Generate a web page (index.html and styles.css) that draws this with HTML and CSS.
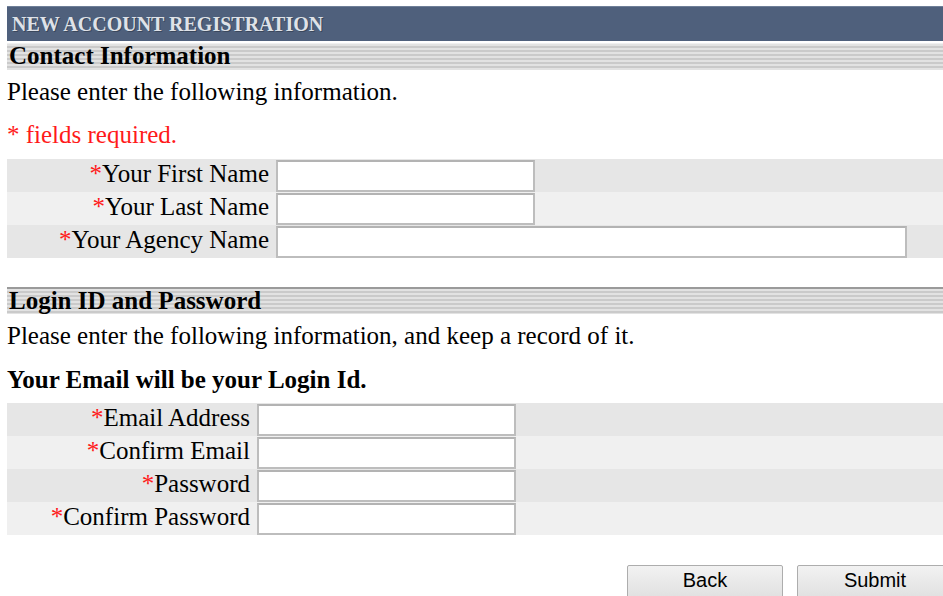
FILE: index.html
```html
<!DOCTYPE html>
<html>
<head>
<meta charset="utf-8">
<title>New Account Registration</title>
<link rel="stylesheet" href="styles.css">
</head>
<body>
<div class="page">
  <div class="title-bar">NEW ACCOUNT REGISTRATION</div>

  <div class="section-band first">Contact Information</div>
  <p class="intro">Please enter the following information.</p>
  <p class="required-note"><span class="star">*</span> fields required.</p>

  <table class="form-table contact">
    <tr class="row-dark">
      <td class="label"><span class="star">*</span>Your First Name</td>
      <td class="field"><input type="text" class="input"></td>
    </tr>
    <tr class="row-light">
      <td class="label"><span class="star">*</span>Your Last Name</td>
      <td class="field"><input type="text" class="input"></td>
    </tr>
    <tr class="row-dark">
      <td class="label"><span class="star">*</span>Your Agency Name</td>
      <td class="field"><input type="text" class="input wide"></td>
    </tr>
  </table>

  <div class="section-band second">Login ID and Password</div>
  <p class="intro">Please enter the following information, and keep a record of it.</p>
  <p class="login-note">Your Email will be your Login Id.</p>

  <table class="form-table login">
    <tr class="row-dark">
      <td class="label"><span class="star">*</span>Email Address</td>
      <td class="field"><input type="text" class="input"></td>
    </tr>
    <tr class="row-light">
      <td class="label"><span class="star">*</span>Confirm Email</td>
      <td class="field"><input type="text" class="input"></td>
    </tr>
    <tr class="row-dark">
      <td class="label"><span class="star">*</span>Password</td>
      <td class="field"><input type="password" class="input"></td>
    </tr>
    <tr class="row-light">
      <td class="label"><span class="star">*</span>Confirm Password</td>
      <td class="field"><input type="password" class="input"></td>
    </tr>
  </table>

  <div class="actions">
    <button type="button" class="btn">Back</button>
    <button type="button" class="btn">Submit</button>
  </div>
</div>
</body>
</html>
```
FILE: styles.css
```css
html {
  overflow: hidden;
}

body {
  margin: 0;
  padding: 6px 0 0 7px;
  background: #ffffff;
  font-family: "Liberation Serif", "Times New Roman", serif;
  font-size: 25px;
  color: #000000;
}

.page {
  width: 946px;
}

.title-bar {
  height: 35px;
  box-sizing: border-box;
  padding: 3px 0 0 5px;
  background: #4f607c;
  border-top: 1px solid #6f7f98;
  color: #dfe2e8;
  font-size: 20px;
  font-weight: bold;
  line-height: 28px;
  text-shadow: 1px 1px 0 #3a475c;
}

.section-band {
  height: 27px;
  box-sizing: border-box;
  padding-left: 2px;
  font-weight: bold;
  line-height: 24px;
  background: repeating-linear-gradient(to bottom, #e2e2e2 0, #e2e2e2 2px, #cacaca 2px, #cacaca 4px);
}

.section-band.first {
  margin-top: 2px;
  border-top: 1px solid #f0f0f0;
}

.section-band.second {
  margin-top: 29px;
  border-top: 2px solid #9a9a9a;
  line-height: 23px;
}

.intro {
  margin: 8px 0 0 0;
  line-height: 28px;
}

.required-note {
  margin: 15px 0 0 0;
  line-height: 28px;
  color: #ff1a1a;
}

.login-note {
  margin: 16px 0 0 0;
  line-height: 28px;
  font-weight: bold;
}

.star {
  color: #ff1a1a;
}

.form-table {
  width: 100%;
  border-collapse: collapse;
  border-spacing: 0;
  margin-top: 10px;
}

.form-table.login {
  margin-top: 9px;
}

.form-table td {
  padding: 0;
  height: 33px;
  line-height: 28px;
}

.row-dark {
  background: #e6e6e6;
}

.row-light {
  background: #f0f0f0;
}

.form-table .label {
  height: 30px;
  text-align: right;
  white-space: nowrap;
  padding: 0 4px 3px 0;
}

.contact .label {
  width: 262px;
}

.login .label {
  width: 243px;
}

.form-table .field {
  padding: 0 0 0 3px;
}

.input {
  display: block;
  box-sizing: border-box;
  width: 259px;
  height: 32px;
  margin: 0;
  border: 2px solid #bdbdbd;
  border-top-color: #b3b3b3;
  background: #ffffff;
  font: inherit;
  padding: 0 4px;
}

.input.wide {
  width: 631px;
}

.actions {
  display: flex;
  justify-content: flex-end;
  gap: 14px;
  margin-top: 30px;
}

.btn {
  width: 156px;
  height: 34px;
  box-sizing: border-box;
  border: 1px solid #adadad;
  border-radius: 2px;
  background: linear-gradient(to bottom, #f2f2f2, #e0e0e0);
  font-family: "Liberation Sans", Arial, sans-serif;
  font-size: 20px;
  color: #000000;
  padding: 0 0 3px 0;
}
```
